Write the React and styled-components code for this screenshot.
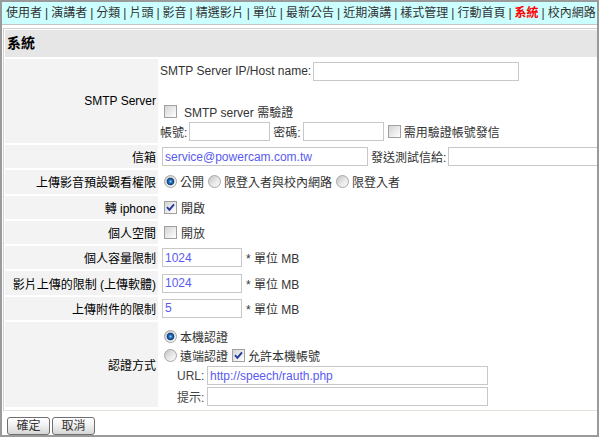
import React from 'react';
import styled, { createGlobalStyle } from 'styled-components';

//----Styled Components----//
const GlobalStyle = createGlobalStyle`
  html, body {
    margin: 0;
    padding: 0;
    background: #fff;
  }
  body {
    font-family: "Liberation Sans", Arial, "Noto Sans CJK TC", sans-serif;
    font-size: 12px;
    color: #333;
  }
`;

const Frame = styled.div`
  width: 599px;
  height: 437px;
  box-sizing: border-box;
  border: 2px solid #9a9a9a;
  overflow: hidden;
  background: #fff;
`;

const NavBar = styled.div`
  height: 22px;
  line-height: 22px;
  background: #ccffff;
  border-bottom: 1px solid #c4c4c4;
  padding-left: 4px;
  white-space: nowrap;
  color: #333;
`;

const NavItem = styled.span`
  color: ${(p) => (p.$active ? '#ff0000' : '#333')};
  font-weight: ${(p) => (p.$active ? 'bold' : 'normal')};
`;

const Sep = styled.span`
  margin: 0 3px;
  color: #333;
`;

const Panel = styled.div`
  width: 680px;
  margin: 3px 0 0 1px;
  padding: 1px;
  border: 1px solid #d0d0d0;
  border-bottom-color: #e4e1da;
`;

const Title = styled.div`
  height: 27px;
  line-height: 27px;
  padding-left: 2px;
  background: #e6e6e6;
  font-size: 14px;
  font-weight: bold;
  color: #000;
`;

const FormTable = styled.table`
  border-collapse: separate;
  border-spacing: 0 2px;
  width: 100%;
`;

const Label = styled.td`
  width: 149px;
  height: 23.3px;
  padding: 0 2px;
  background: #f3f3f3;
  text-align: right;
  vertical-align: middle;
  color: #000;
  white-space: nowrap;
`;

const Value = styled.td`
  padding: ${(p) => p.$pad || '0 2px'};
  vertical-align: middle;
  white-space: nowrap;
  color: #333;
`;

const Line = styled.div`
  display: flex;
  align-items: center;
  height: ${(p) => p.$h || 20}px;
  padding-left: ${(p) => p.$indent || 0}px;
  white-space: nowrap;
`;

const Text = styled.span`
  margin-left: ${(p) => p.$ml || 0}px;
  color: ${(p) => p.$color || '#333'};
`;

const SubLabel = styled.span`
  display: inline-block;
  width: 28px;
  color: #444;
`;

const TextInput = styled.input`
  box-sizing: border-box;
  width: ${(p) => p.$w}px;
  height: 19px;
  margin: 0 0 0 ${(p) => (p.$ml === undefined ? 2 : p.$ml)}px;
  padding: 0 2px;
  border: 1px solid #c8c8c8;
  font-family: "Liberation Sans", Arial, sans-serif;
  font-size: 12px;
  color: #5a5af0;
  background: #fff;
  outline: none;
  flex: none;
`;

const CheckBox = styled.span`
  display: inline-flex;
  align-items: center;
  justify-content: center;
  flex: none;
  width: 13px;
  height: 13px;
  box-sizing: border-box;
  margin: 0 3px 0 4px;
  border: 1px solid #a0a0a0;
  background: linear-gradient(135deg, #d4d4d4 0%, #eeeeee 60%, #ffffff 100%);
`;

const Radio = styled.span`
  display: inline-block;
  flex: none;
  width: 13px;
  height: 13px;
  box-sizing: border-box;
  margin: 0 3px 0 4px;
  border-radius: 50%;
  border: 1px solid #a6a6a6;
  background: ${(p) =>
    p.$checked
      ? 'radial-gradient(circle at 50% 50%, #8fd2ff 0, #2b7cc9 1.4px, #0c3b75 3.4px, rgba(12,59,117,0) 4.2px), linear-gradient(135deg, #c8c8c8, #ffffff)'
      : 'linear-gradient(135deg, #c4c4c4 0%, #e8e8e8 55%, #ffffff 100%)'};
`;

const Footer = styled.div`
  display: flex;
  gap: 2px;
  padding: 6px 0 0 5px;
`;

const Button = styled.button`
  width: 43px;
  height: 18px;
  padding: 0;
  border: 1px solid #6f6f6f;
  border-radius: 3px;
  background: linear-gradient(#ffffff 0%, #f1f1f1 45%, #d6d6d6 100%);
  box-shadow: inset 0 1px 0 #fff;
  font-family: "Liberation Sans", Arial, "Noto Sans CJK TC", sans-serif;
  font-size: 12px;
  line-height: 16px;
  color: #333;
`;
//----End of Styled Components----//

const navItems = ['使用者', '演講者', '分類', '片頭', '影音', '精選影片', '單位', '最新公告', '近期演講', '樣式管理', '行動首頁', '系統', '校內網路'];

function Check({ checked }) {
  return (
    <CheckBox>
      {checked && (
        <svg width="11" height="11" viewBox="0 0 11 11">
          <path d="M2 5.2 L4.4 7.8 L9 2.4" fill="none" stroke="#24399b" strokeWidth="1.9" />
        </svg>
      )}
    </CheckBox>
  );
}

export default function App() {
  return (
    <Frame>
      <GlobalStyle />
      <NavBar>
        {navItems.map((item, i) => (
          <React.Fragment key={item}>
            {i > 0 && <Sep>|</Sep>}
            <NavItem $active={item === '系統'}>{item}</NavItem>
          </React.Fragment>
        ))}
      </NavBar>
      <Panel>
        <Title>系統</Title>
        <FormTable>
          <tbody>
            <tr>
              <Label>SMTP Server</Label>
              <Value $pad="2px 2px">
                <Line>
                  <Text>SMTP Server IP/Host name:</Text>
                  <TextInput $w={206} />
                </Line>
                <Line />
                <Line>
                  <Check />
                  <Text $ml={4}>SMTP server 需驗證</Text>
                </Line>
                <Line>
                  <Text>帳號:</Text>
                  <TextInput $w={81} />
                  <Text $ml={3}>密碼:</Text>
                  <TextInput $w={81} />
                  <Check />
                  <Text>需用驗證帳號發信</Text>
                </Line>
              </Value>
            </tr>
            <tr>
              <Label>信箱</Label>
              <Value>
                <Line>
                  <TextInput $w={206} defaultValue="service@powercam.com.tw" />
                  <Text $ml={3}>發送測試信給:</Text>
                  <TextInput $w={206} />
                </Line>
              </Value>
            </tr>
            <tr>
              <Label>上傳影音預設觀看權限</Label>
              <Value>
                <Line>
                  <Radio $checked />
                  <Text>公開</Text>
                  <Radio />
                  <Text>限登入者與校內網路</Text>
                  <Radio />
                  <Text>限登入者</Text>
                </Line>
              </Value>
            </tr>
            <tr>
              <Label>轉 iphone</Label>
              <Value>
                <Line>
                  <Check checked />
                  <Text $ml={1}>開啟</Text>
                </Line>
              </Value>
            </tr>
            <tr>
              <Label>個人空間</Label>
              <Value>
                <Line>
                  <Check />
                  <Text $ml={1}>開放</Text>
                </Line>
              </Value>
            </tr>
            <tr>
              <Label>個人容量限制</Label>
              <Value>
                <Line>
                  <TextInput $w={80} defaultValue="1024" />
                  <Text $ml={4}>* 單位 MB</Text>
                </Line>
              </Value>
            </tr>
            <tr>
              <Label>影片上傳的限制 (上傳軟體)</Label>
              <Value>
                <Line>
                  <TextInput $w={80} defaultValue="1024" />
                  <Text $ml={4}>* 單位 MB</Text>
                </Line>
              </Value>
            </tr>
            <tr>
              <Label>上傳附件的限制</Label>
              <Value>
                <Line>
                  <TextInput $w={80} defaultValue="5" />
                  <Text $ml={4}>* 單位 MB</Text>
                </Line>
              </Value>
            </tr>
            <tr>
              <Label>認證方式</Label>
              <Value $pad="5px 2px 0">
                <Line $h={19}>
                  <Radio $checked />
                  <Text>本機認證</Text>
                </Line>
                <Line $h={19}>
                  <Radio />
                  <Text>遠端認證</Text>
                  <Check checked />
                  <Text>允許本機帳號</Text>
                </Line>
                <Line $h={21} $indent={17}>
                  <SubLabel>URL:</SubLabel>
                  <TextInput $w={281} defaultValue="http://speech/rauth.php" />
                </Line>
                <Line $h={21} $indent={17}>
                  <SubLabel>提示:</SubLabel>
                  <TextInput $w={281} />
                </Line>
              </Value>
            </tr>
          </tbody>
        </FormTable>
      </Panel>
      <Footer>
        <Button>確定</Button>
        <Button>取消</Button>
      </Footer>
    </Frame>
  );
}
